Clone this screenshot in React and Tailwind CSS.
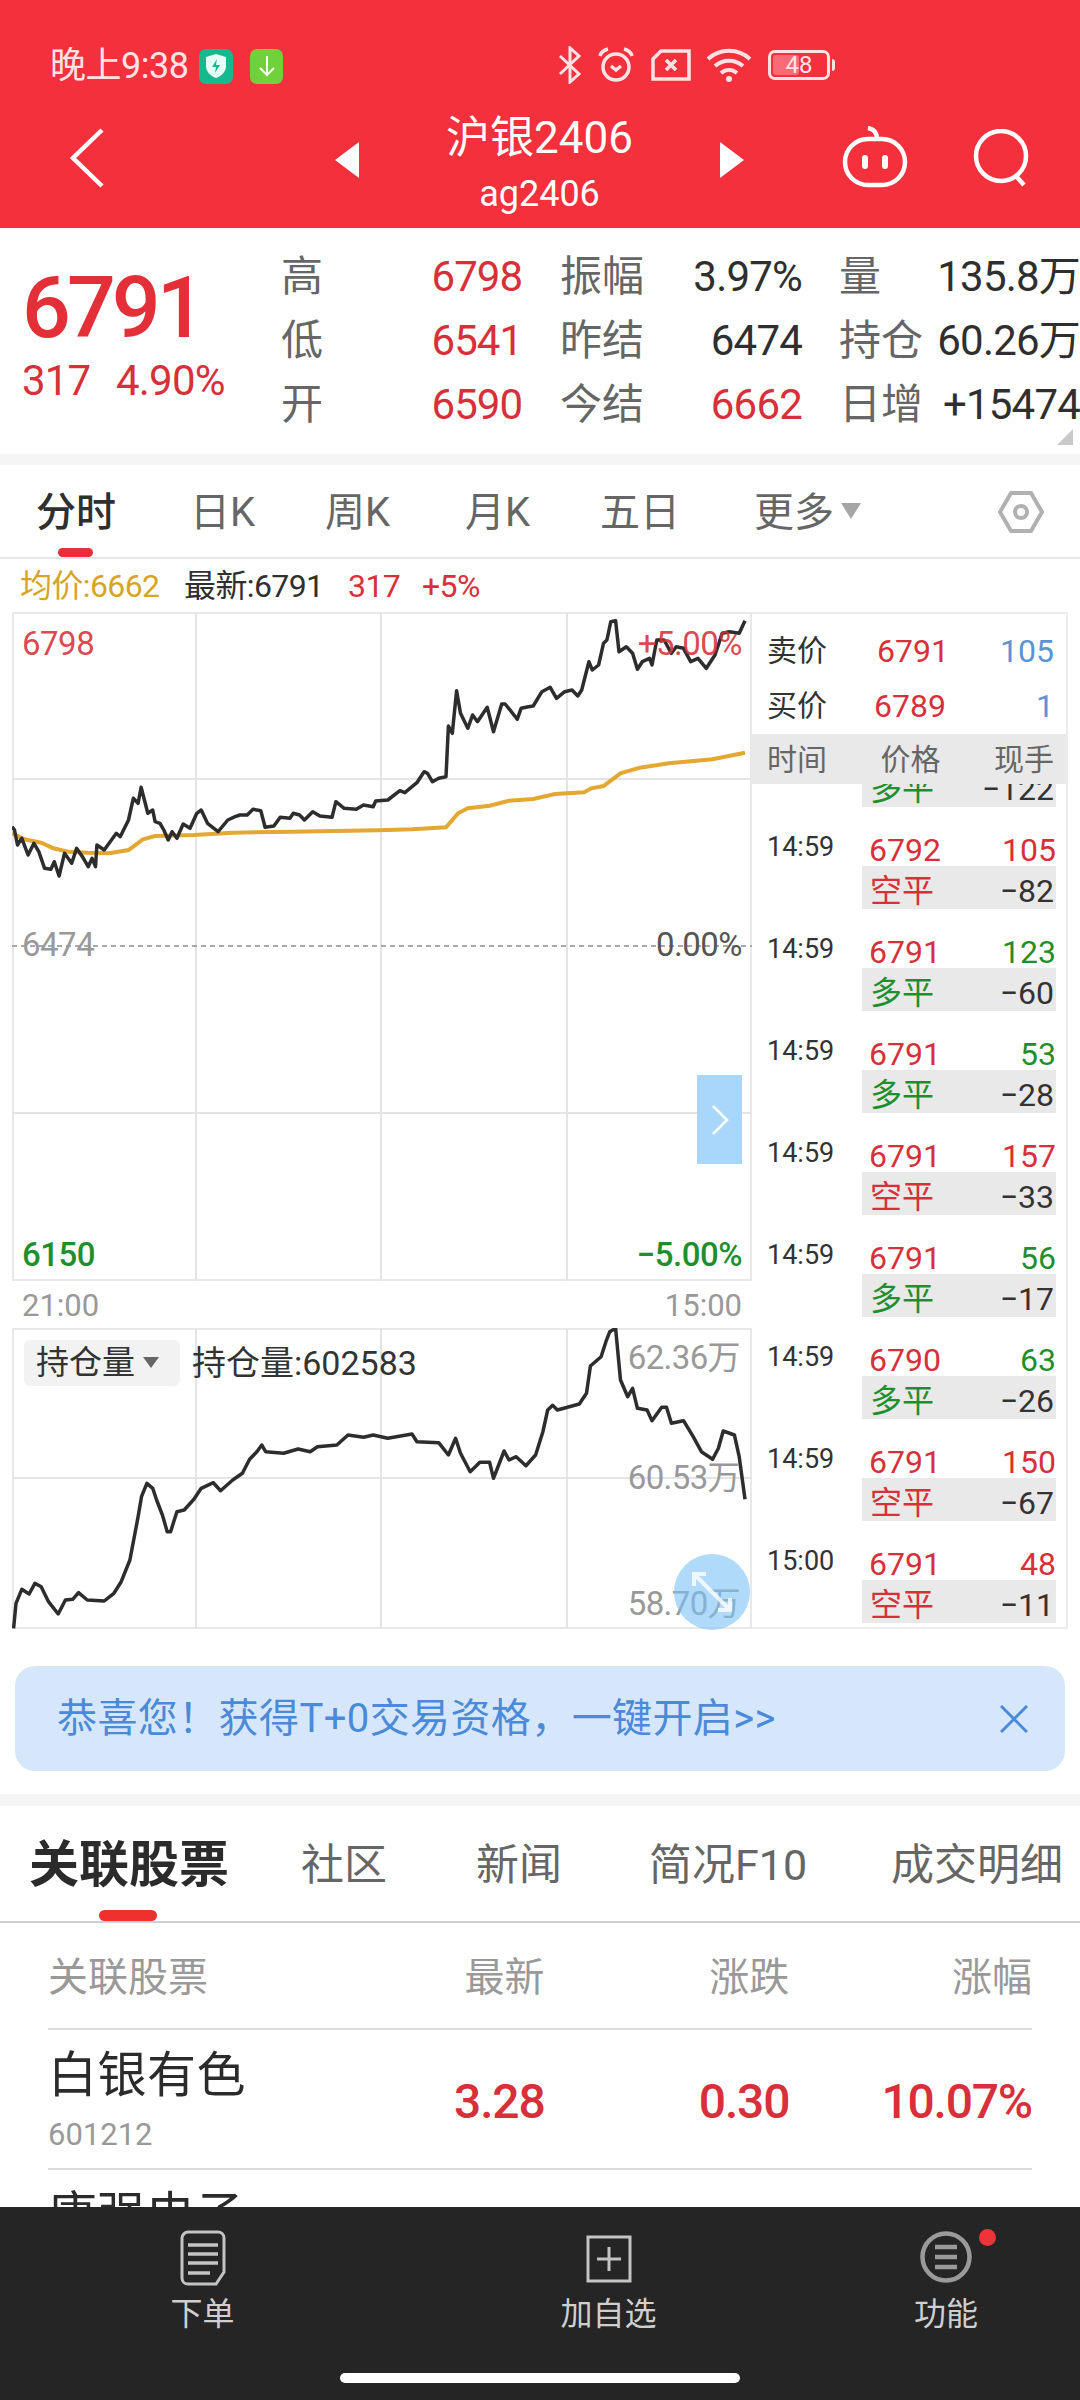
import React from "react";

// Intraday series, sampled on a 2.063x / 3x grid starting at page y = 600 / 1300
const PRICE = [[25,680],[30,690],[36,735],[45,715],[58,765],[70,730],[80,755],[92,805],[105,808],[112,785],[122,828],[133,760],[148,790],[158,745],[170,770],[182,800],[190,775],[197,800],[200,735],[215,750],[240,700],[248,710],[265,660],[275,595],[285,610],[291,562],[298,600],[305,640],[315,630],[320,665],[330,670],[338,690],[347,720],[355,695],[365,715],[378,672],[392,685],[406,640],[415,630],[428,670],[450,695],[470,660],[485,650],[495,645],[510,645],[522,628],[538,632],[547,682],[565,678],[578,652],[598,655],[605,640],[618,645],[628,660],[645,635],[660,648],[685,652],[693,605],[710,625],[735,628],[750,615],[770,620],[775,603],[800,600],[825,572],[835,578],[860,548],[875,515],[882,520],[892,545],[905,535],[920,530],[925,378],[933,400],[942,272],[950,340],[965,385],[975,345],[985,365],[1005,322],[1018,395],[1035,312],[1042,312],[1055,335],[1067,358],[1075,325],[1090,320],[1100,318],[1118,275],[1135,262],[1148,295],[1165,275],[1180,270],[1192,288],[1200,270],[1215,185],[1222,210],[1235,195],[1245,130],[1252,120],[1260,65],[1270,62],[1277,155],[1292,140],[1305,160],[1315,208],[1325,185],[1340,175],[1345,195],[1355,120],[1370,120],[1385,160],[1395,140],[1410,145],[1425,185],[1440,175],[1457,205],[1475,165],[1490,100],[1505,95],[1525,100],[1537,62]];
const AVERAGE = [[25,700],[50,718],[85,728],[110,745],[140,755],[180,758],[225,760],[265,750],[295,718],[320,708],[400,705],[480,698],[600,695],[780,691],[850,688],[920,682],[945,640],[965,625],[1010,617],[1050,602],[1100,597],[1145,582],[1205,577],[1220,565],[1245,558],[1280,520],[1320,503],[1380,490],[1470,478],[1537,458]];
const HOLDINGS = [[28,985],[33,910],[45,868],[60,882],[72,850],[85,860],[100,905],[120,942],[135,900],[150,898],[162,878],[180,900],[215,903],[235,880],[250,845],[268,780],[285,650],[292,590],[303,550],[315,565],[323,600],[335,645],[345,695],[352,695],[365,635],[380,630],[400,598],[415,565],[440,548],[455,572],[480,540],[500,520],[515,478],[530,455],[540,435],[548,455],[585,460],[615,447],[640,455],[655,440],[695,435],[718,405],[750,412],[770,405],[800,415],[850,402],[860,425],[905,428],[925,465],[940,415],[950,460],[970,515],[990,487],[1010,487],[1018,535],[1040,453],[1050,480],[1065,470],[1085,497],[1105,465],[1120,395],[1130,330],[1140,316],[1150,330],[1195,312],[1210,280],[1218,198],[1240,170],[1250,125],[1258,95],[1270,85],[1280,240],[1295,290],[1305,265],[1315,325],[1335,330],[1345,362],[1365,322],[1375,322],[1385,370],[1410,362],[1430,410],[1447,455],[1470,478],[1482,445],[1492,393],[1515,405],[1525,470],[1537,598]];

// Series x runs from the page edge, the plot starts at x = 12
const toPoints = (series, top) =>
  series.map(([x, y]) => `${(x / 2.063 - 12).toFixed(1)},${(y / 3 + top).toFixed(1)}`).join(" ");

const TRADES = [
  ["14:59", "6792", "105", "r", "多平", "−122", "g"],
  ["14:59", "6792", "105", "r", "空平", "−82", "r"],
  ["14:59", "6791", "123", "g", "多平", "−60", "g"],
  ["14:59", "6791", "53", "g", "多平", "−28", "g"],
  ["14:59", "6791", "157", "r", "空平", "−33", "r"],
  ["14:59", "6791", "56", "g", "多平", "−17", "g"],
  ["14:59", "6790", "63", "g", "多平", "−26", "g"],
  ["14:59", "6791", "150", "r", "空平", "−67", "r"],
  ["15:00", "6791", "48", "r", "空平", "−11", "r"],
];

function StatusIcons() {
  return (
    <div className="flex items-center">
      <svg width="27" height="38" viewBox="0 0 27 38" fill="none" stroke="#ffe3e4" strokeWidth="3"><path d="M4 10l19 18-9 8V2l9 8-19 18" /></svg>
      <svg width="40" height="38" viewBox="0 0 40 38" fill="none" stroke="#ffe3e4" strokeWidth="3.5" className="ml-[13px]"><circle cx="20" cy="21" r="13" /><path d="M4 10c1-4 4-6 8-7M36 10c-1-4-4-6-8-7" /><path d="M15 20l5 4 5-4" /></svg>
      <svg width="40" height="32" viewBox="0 0 40 32" fill="none" stroke="#ffe3e4" strokeWidth="3.5" className="ml-[15px]"><path d="M10 2h28v28H2V10z" /><path d="M15 11l10 10M25 11L15 21" /></svg>
      <svg width="46" height="36" viewBox="0 0 46 36" fill="none" stroke="#ffe3e4" strokeWidth="4" className="ml-[15px]"><path d="M2 12c12-11 30-11 42 0M9 19c8-7 20-7 28 0M15 26c5-4 11-4 16 0" /><circle cx="23" cy="32" r="3" fill="#ffe3e4" stroke="none" /></svg>
      <div className="ml-[16px] relative flex h-[30px] w-[62px] items-center justify-center rounded-[7px] border-[3px] border-[#ffe3e4] text-[24px] leading-none text-[#ffe3e4]">
        <span className="absolute left-[2px] top-[2px] bottom-[2px] w-[26px] rounded-[3px] bg-[#fb6b76]" />
        <span className="relative">48</span>
      </div>
      <span className="ml-[2px] h-[12px] w-[3px] rounded-r bg-[#ffe3e4]" />
    </div>
  );
}

function Header() {
  return (
    <header className="h-[228px] bg-[#f5303d] text-white">
      <div className="flex h-[112px] items-end justify-between pb-[28px] pl-[50px] pr-[245px]">
        <div className="flex items-center">
          <span className="w-[149px] text-[36px] leading-[36px] tracking-[-0.5px] text-[#ffe3e4]">晚上9:38</span>
          <span className="flex h-[35px] w-[34px] items-center justify-center rounded-[7px] bg-[#16b98d]">
            <svg width="22" height="26" viewBox="0 0 22 26"><path d="M11 1l10 3v9c0 6-5 10-10 12C6 23 1 19 1 13V4z" fill="#e8fff6" /><path d="M12 6l-5 8h4l-1 6 5-8h-4z" fill="#16b98d" /></svg>
          </span>
          <span className="ml-[17px] flex h-[35px] w-[33px] items-center justify-center rounded-[7px] bg-[#70d13a]">
            <svg width="20" height="22" viewBox="0 0 20 22" fill="none" stroke="#f2ffe9" strokeWidth="2"><path d="M10 1v19M3 13l7 7 7-7" /></svg>
          </span>
        </div>
        <StatusIcons />
      </div>
      <div className="flex h-[116px] items-start">
        <svg width="36" height="60" viewBox="0 0 36 60" fill="none" stroke="white" strokeWidth="4.5" className="ml-[69px] mt-[16px] shrink-0"><path d="M33 2L4 30l29 28" /></svg>
        <svg width="24" height="36" viewBox="0 0 24 36" fill="white" className="ml-[230px] mt-[30px] shrink-0"><path d="M24 0v36L0 18z" /></svg>
        <div className="w-[361px] text-center">
          <div className="mt-[1px] text-[44px] leading-[50px]">沪银2406</div>
          <div className="mt-[9px] text-[36px] leading-[44px]">ag2406</div>
        </div>
        <svg width="24" height="36" viewBox="0 0 24 36" fill="white" className="mt-[30px] shrink-0"><path d="M0 0v36l24-18z" /></svg>
        <svg width="68" height="62" viewBox="0 0 68 62" fill="none" stroke="white" strokeWidth="4.5" className="ml-[97px] mt-[14px] shrink-0">
          <path d="M27 2c6 1 9 5 9 11" />
          <rect x="4" y="13" width="60" height="46" rx="23" />
          <rect x="21" y="29" width="6" height="14" rx="3" fill="white" stroke="none" />
          <rect x="41" y="29" width="6" height="14" rx="3" fill="white" stroke="none" />
        </svg>
        <svg width="58" height="58" viewBox="0 0 58 58" fill="none" stroke="white" strokeWidth="4.5" className="ml-[64px] mt-[17px] shrink-0"><circle cx="28" cy="27" r="25" /><path d="M42 46l9 10" /></svg>
      </div>
    </header>
  );
}

function Quote() {
  const rows = [
    ["高", "6798", "振幅", "3.97%", "量", "135.8万"],
    ["低", "6541", "昨结", "6474", "持仓", "60.26万"],
    ["开", "6590", "今结", "6662", "日增", "+15474"],
  ];
  return (
    <section className="relative flex h-[226px] bg-white">
      <div className="w-[281px] pl-[22px]">
        <div className="mt-[34px] text-[86px] leading-[92px] font-medium tracking-[-4px] text-[#e22f38]">6791</div>
        <div className="mt-[3px] flex text-[42px] leading-[48px] tracking-[-0.8px] text-[#d8303a]">
          <span className="w-[94px]">317</span>
          <span>4.90%</span>
        </div>
      </div>
      <div className="mt-[17px] text-[42px] leading-[64px]">
        {rows.map((r) => (
          <div key={r[0]} className="flex h-[64px] items-center whitespace-nowrap">
            <span className="w-[42px] text-[#666]">{r[0]}</span>
            <span className="w-[199px] text-right tracking-[-1px] text-[#d8303a]">{r[1]}</span>
            <span className="ml-[38px] w-[90px] text-[#666]">{r[2]}</span>
            <span className={`w-[152px] text-right tracking-[-0.8px] ${r[0] === "开" ? "text-[#d8303a]" : "text-[#2f2f2f]"}`}>{r[3]}</span>
            <span className="ml-[37px] w-[84px] text-[#666]">{r[4]}</span>
            <span className="w-[157px] text-right tracking-[-0.8px] text-[#2f2f2f]">{r[5]}</span>
          </div>
        ))}
      </div>
      <span className="absolute bottom-[9px] right-[7px] h-0 w-0 border-b-[16px] border-l-[16px] border-b-[#c9c9c9] border-l-transparent" />
    </section>
  );
}

function ChartTabs() {
  return (
    <div className="relative flex h-[94px] items-center border-b-2 border-[#e6e6e6] pl-[36px] pt-[4px] text-[40px] text-[#666]">
      <span className="w-[154px] font-medium text-[#2f2f2f]">分时</span>
      <span className="w-[135px]">日K</span>
      <span className="w-[140px]">周K</span>
      <span className="w-[135px]">月K</span>
      <span className="w-[154px]">五日</span>
      <span>更多</span>
      <span className="ml-[7px] mb-[4px] h-0 w-0 border-x-[10px] border-t-[16px] border-x-transparent border-t-[#a6a6a6]" />
      <svg width="46" height="46" viewBox="0 0 46 46" fill="none" stroke="#b0b0b0" strokeWidth="4" className="ml-[137px] mb-[3px]"><path d="M13 4h20l11 19-11 19H13L2 23z" /><circle cx="23" cy="23" r="6" /></svg>
      <span className="absolute bottom-0 left-[58px] h-[9px] w-[35px] rounded-full bg-[#e8303a]" />
    </div>
  );
}

function Legend() {
  return (
    <div className="flex h-[53px] items-center pl-[20px] text-[32px] leading-none tracking-[-0.6px]">
      <span className="w-[164px] text-[#d9a328]">均价:6662</span>
      <span className="w-[164px] text-[#2f2f2f]">最新:6791</span>
      <span className="w-[74px] text-[#d8303a]">317</span>
      <span className="text-[#d8303a]">+5%</span>
    </div>
  );
}

function PriceChart() {
  return (
    <div className="relative h-[669px] border-2 border-[#e8e8e8]">
      <svg width="740" height="669" className="absolute -left-[2px] -top-[2px]">
        <path d="M184 0v669M369 0v669M555 0v669M0 167h740M0 501h740" stroke="#e4e4e4" strokeWidth="2" fill="none" />
        <path d="M0 334h740" stroke="#a8a8a8" strokeWidth="2" strokeDasharray="5 4" fill="none" />
        <polyline points={toPoints(AVERAGE, -12)} fill="none" stroke="#e3a733" strokeWidth="4" />
        <polyline points={toPoints(PRICE, -12)} fill="none" stroke="#2d2d2d" strokeWidth="3.5" strokeLinejoin="round" />
      </svg>
      <div className="absolute inset-x-0 top-[10px] flex justify-between px-[8px] text-[33px] leading-[40px] tracking-[-0.5px] text-[#d8303a]/90">
        <span>6798</span>
        <span>+5.00%</span>
      </div>
      <div className="absolute inset-x-0 top-[311px] flex justify-between px-[8px] text-[33px] leading-[40px] tracking-[-0.5px] text-[#999]">
        <span>6474</span>
        <span className="text-[#555]">0.00%</span>
      </div>
      <div className="absolute inset-x-0 bottom-[4px] flex justify-between px-[8px] text-[33px] font-medium leading-[40px] tracking-[-0.5px] text-[#1f8f2d]">
        <span>6150</span>
        <span>−5.00%</span>
      </div>
      <div className="absolute right-[8px] top-[461px] flex h-[89px] w-[45px] items-center justify-center bg-[#a9d7fb]">
        <svg width="18" height="32" viewBox="0 0 18 32" fill="none" stroke="white" strokeWidth="2.5"><path d="M2 2l14 14L2 30" /></svg>
      </div>
    </div>
  );
}

function HoldingsChart() {
  return (
    <div className="relative h-[301px] border-2 border-[#e8e8e8]">
      <svg width="740" height="301" className="absolute -left-[2px] -top-[2px]">
        <path d="M184 0v301M369 0v301M555 0v301M0 150h740" stroke="#e4e4e4" strokeWidth="2" fill="none" />
        <polyline points={toPoints(HOLDINGS, -28)} fill="none" stroke="#2d2d2d" strokeWidth="3.5" strokeLinejoin="round" />
      </svg>
      <div className="absolute left-[10px] top-[10px] flex items-center">
        <span className="flex h-[46px] w-[156px] items-center rounded-[6px] bg-[#f2f2f2] pl-[12px] text-[33px] text-[#333]">
          持仓量
          <span className="ml-[8px] mb-[2px] h-0 w-0 border-x-[8px] border-t-[11px] border-x-transparent border-t-[#666]" />
        </span>
        <span className="ml-[12px] text-[34px] leading-none text-[#333]">持仓量:602583</span>
      </div>
      <span className="absolute right-[10px] top-[8px] text-[33px] leading-[40px] tracking-[-0.6px] text-[#999]">62.36万</span>
      <span className="absolute right-[10px] top-[128px] text-[33px] leading-[40px] tracking-[-0.6px] text-[#999]">60.53万</span>
      <span className="absolute right-[10px] top-[254px] text-[33px] leading-[40px] tracking-[-0.6px] text-[#999]">58.70万</span>
      <div className="absolute right-[0px] top-[224px] flex h-[76px] w-[76px] items-center justify-center rounded-full bg-[#7cc2f7]/60">
        <svg width="44" height="44" viewBox="0 0 44 44" fill="none" stroke="white" strokeWidth="4" opacity="0.8"><path d="M4 16V4h12M4 4l36 36M40 28v12H28" /></svg>
      </div>
    </div>
  );
}

function TradeRow({ t }) {
  const tone = (k) => (k === "r" ? "text-[#d8303a]" : "text-[#1f8f2d]");
  return (
    <div className="h-[102px] pl-[15px]">
      <div className="flex h-[37px] items-start">
        <span className="mt-[2px] w-[102px] text-[27px] leading-[32px] text-[#333]">{t[0]}</span>
        <div className="mt-[3px] flex w-[187px] items-center justify-between text-[32px] leading-[37px]">
          <span className="text-[#d8303a]">{t[1]}</span>
          <span className={tone(t[3])}>{t[2]}</span>
        </div>
      </div>
      <div className="ml-[95px] flex h-[43px] w-[194px] items-center justify-between bg-[#e9e9e9] pl-[8px] pr-[2px] pt-[7px] text-[32px] leading-none">
        <span className={tone(t[6])}>{t[4]}</span>
        <span className="text-[#333]">{t[5]}</span>
      </div>
    </div>
  );
}

function TradePanel() {
  return (
    <aside className="flex h-[1017px] w-[316px] flex-col border-y-2 border-r-2 border-[#ececec]">
      <div className="h-[120px] pl-[15px] pr-[12px] pt-[9px] text-[32px]">
        <div className="flex h-[55px] items-center">
          <span className="w-[110px] text-[30px] text-[#333]">卖价</span>
          <span className="w-[66px] text-[#d8303a]">6791</span>
          <span className="flex-1 text-right text-[#5b93d3]">105</span>
        </div>
        <div className="flex h-[55px] items-center">
          <span className="w-[107px] text-[30px] text-[#333]">买价</span>
          <span className="w-[70px] text-[#d8303a]">6789</span>
          <span className="flex-1 text-right text-[#5b93d3]">1</span>
        </div>
      </div>
      <div className="relative z-10 flex h-[50px] items-center justify-between bg-[#e9e9e9] pl-[15px] pr-[12px] text-[30px] text-[#666]">
        <span>时间</span>
        <span>价格</span>
        <span>现手</span>
      </div>
      <div className="flex-1 overflow-hidden">
        <div className="-mt-[57px]">
          {TRADES.map((t, i) => (
            <TradeRow key={i} t={t} />
          ))}
        </div>
      </div>
    </aside>
  );
}

function Charts() {
  return (
    <div className="flex pl-[12px]">
      <div className="w-[740px]">
        <PriceChart />
        <div className="flex h-[47px] items-center justify-between px-[10px] pt-[3px] text-[31px] text-[#999]">
          <span>21:00</span>
          <span>15:00</span>
        </div>
        <HoldingsChart />
      </div>
      <TradePanel />
    </div>
  );
}

function Banner() {
  return (
    <div className="px-[15px] pt-[37px] pb-[23px]">
      <div className="flex h-[105px] items-center justify-between rounded-[20px] bg-[#d7e7fb] pl-[42px] pr-[37px] text-[40px] text-[#4a8ad8]">
        <span className="tracking-[0.4px]">恭喜您！获得T+0交易资格，一键开启&gt;&gt;</span>
        <svg width="28" height="28" viewBox="0 0 28 28" fill="none" stroke="#4a8ad8" strokeWidth="3"><path d="M1 1l26 26M27 1L1 27" /></svg>
      </div>
    </div>
  );
}

function RelatedTabs() {
  return (
    <div className="relative flex h-[117px] items-center border-b-2 border-[#cfcfcf] pl-[29px] pt-[4px] text-[43px] text-[#666]">
      <span className="w-[272px] text-[50px] font-bold text-[#2b2b2b]">关联股票</span>
      <span className="w-[175px]">社区</span>
      <span className="w-[173px]">新闻</span>
      <span className="w-[242px]">简况F10</span>
      <span className="whitespace-nowrap">成交明细</span>
      <span className="absolute bottom-0 left-[99px] h-[11px] w-[58px] rounded-full bg-[#f0302f]" />
    </div>
  );
}

function RelatedTable() {
  return (
    <div className="px-[48px]">
      <div className="flex h-[107px] items-center border-b-2 border-[#dcdcdc] pt-[5px] text-[40px] text-[#999]">
        <span className="w-[397px]">关联股票</span>
        <span className="w-[100px] text-right">最新</span>
        <span className="w-[245px] text-right">涨跌</span>
        <span className="w-[243px] text-right">涨幅</span>
      </div>
      <div className="flex h-[140px] items-center border-b-2 border-[#dcdcdc]">
        <div className="w-[397px]">
          <div className="text-[49px] leading-[60px] tracking-[0.5px] text-[#2b2b2b]">白银有色</div>
          <div className="mt-[11px] text-[31px] leading-[36px] text-[#999]">601212</div>
        </div>
        <span className="w-[100px] pt-[5px] text-right text-[48px] font-medium tracking-[-1.2px] text-[#d8303a]">3.28</span>
        <span className="w-[245px] pt-[5px] text-right text-[48px] font-medium tracking-[-1.2px] text-[#d8303a]">0.30</span>
        <span className="w-[243px] pt-[5px] text-right text-[48px] font-medium tracking-[-1.2px] text-[#d8303a]">10.07%</span>
      </div>
      <div className="pt-[16px] text-[49px] leading-[60px] text-[#2b2b2b]">康强电子</div>
    </div>
  );
}

function BottomBar() {
  return (
    <footer className="h-[193px] shrink-0 bg-[#252525] text-[32px] text-[#cfcfcf]">
      <div className="flex h-[166px] pt-[23px]">
        <div className="ml-[170px] flex w-[65px] flex-col items-center">
          <svg width="46" height="56" viewBox="0 0 46 56" fill="none" stroke="#c4c4c4" strokeWidth="3"><path d="M8 2h30c3 0 6 2 6 6v34l-8 12H8c-3 0-6-2-6-6V8c0-3 3-6 6-6z" /><path d="M8 15h30M8 24h30M8 33h30M8 43h22" strokeWidth="3.5" /></svg>
          <span className="mt-[6px] leading-[44px]">下单</span>
        </div>
        <div className="ml-[325px] flex w-[97px] flex-col items-center">
          <svg width="46" height="56" viewBox="0 0 46 56" fill="none" stroke="#c4c4c4" strokeWidth="3" className="mt-[1px]"><rect x="2" y="6" width="42" height="44" /><path d="M23 16v24M11 28h24" /></svg>
          <span className="mt-[5px] leading-[44px]">加自选</span>
        </div>
        <div className="relative ml-[257px] flex w-[64px] flex-col items-center">
          <svg width="52" height="56" viewBox="0 0 52 56" fill="none" stroke="#9a9a9a" strokeWidth="4.5"><circle cx="26" cy="27" r="23.5" /><path d="M15 17h22M15 27h22M15 37h22" strokeWidth="4.5" /></svg>
          <span className="mt-[6px] whitespace-nowrap leading-[44px]">功能</span>
          <span className="absolute right-[-18px] top-[-1px] h-[17px] w-[17px] rounded-full bg-[#ee3438]" />
        </div>
      </div>
      <div className="flex justify-center">
        <span className="h-[10px] w-[400px] rounded-full bg-white" />
      </div>
    </footer>
  );
}

export default function App() {
  return (
    <div className="flex h-[2400px] w-[1080px] flex-col overflow-hidden bg-white font-['Roboto','Noto_Sans_CJK_SC',sans-serif]">
      <Header />
      <Quote />
      <div className="h-[11px] shrink-0 bg-[#f5f5f5]" />
      <ChartTabs />
      <Legend />
      <Charts />
      <Banner />
      <div className="h-[12px] shrink-0 bg-[#f5f5f5]" />
      <main className="min-h-0 flex-1 overflow-hidden">
        <RelatedTabs />
        <RelatedTable />
      </main>
      <BottomBar />
    </div>
  );
}
